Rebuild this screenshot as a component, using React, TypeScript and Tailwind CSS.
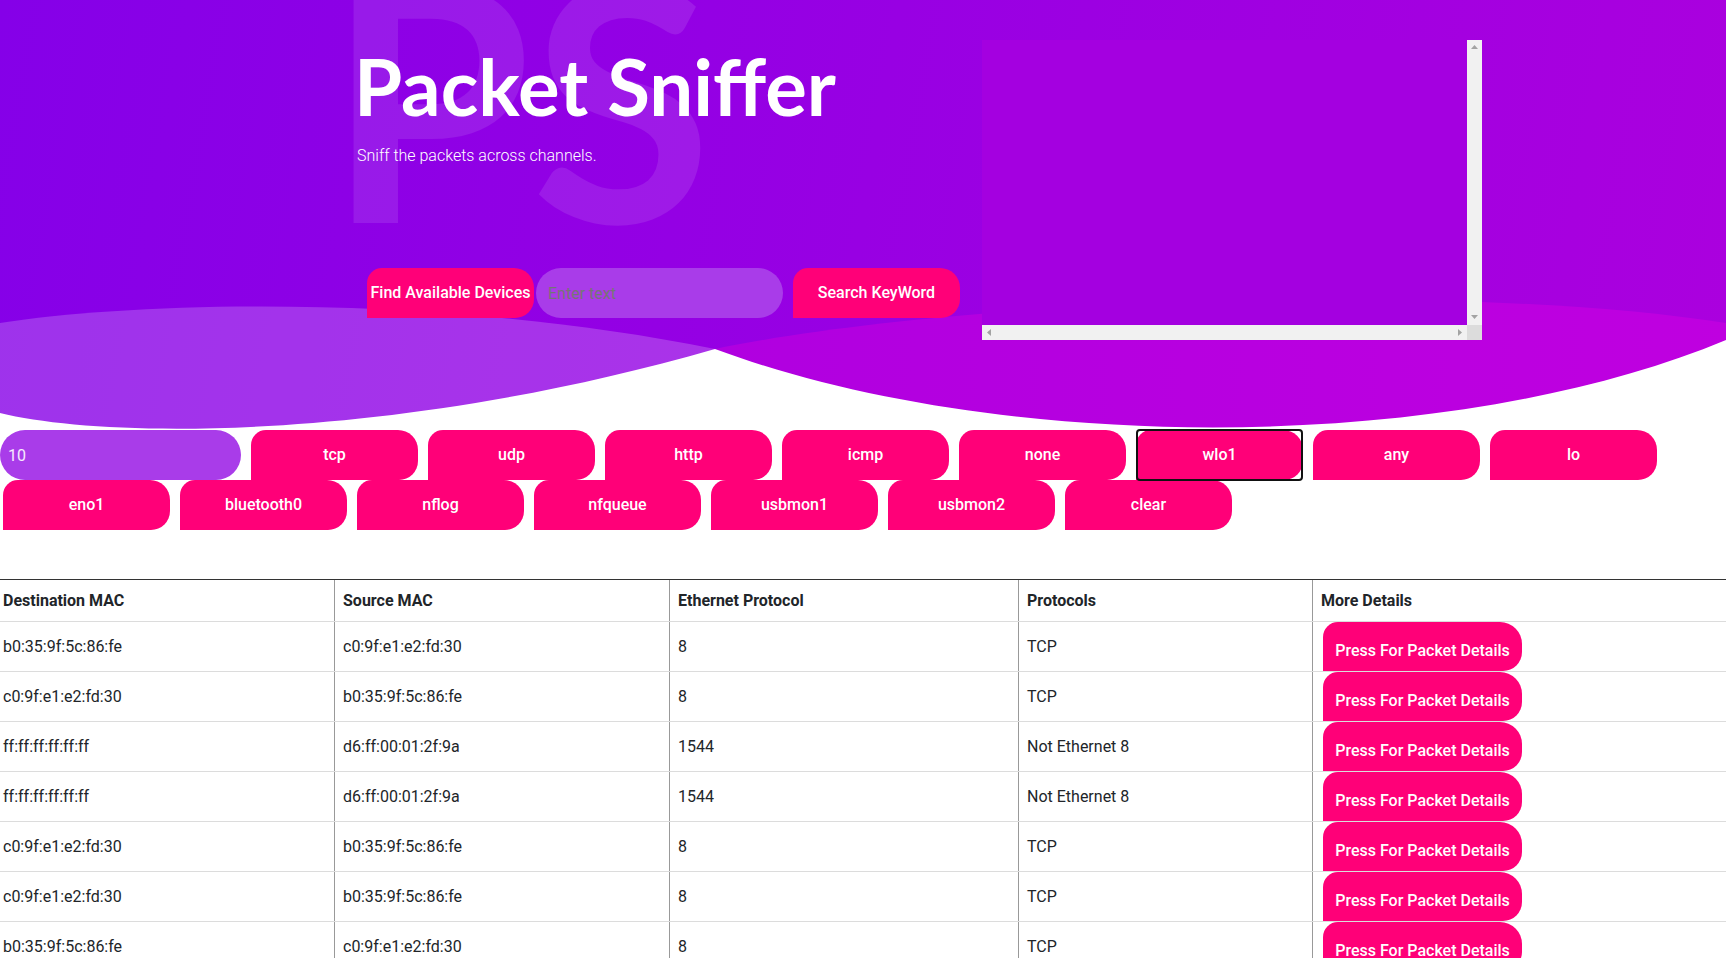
import { useState } from "react";

const pill =
  "h-[50px] w-[167px] shrink-0 rounded-tl-[15px] rounded-tr-[20px] rounded-br-[19px] rounded-bl-none bg-[#ff0078] text-base font-medium text-white";

const filters = [
  "tcp",
  "udp",
  "http",
  "icmp",
  "none",
  "wlo1",
  "any",
  "lo",
  "eno1",
  "bluetooth0",
  "nflog",
  "nfqueue",
  "usbmon1",
  "usbmon2",
  "clear",
];

const packets = [
  ["b0:35:9f:5c:86:fe", "c0:9f:e1:e2:fd:30", "8", "TCP"],
  ["c0:9f:e1:e2:fd:30", "b0:35:9f:5c:86:fe", "8", "TCP"],
  ["ff:ff:ff:ff:ff:ff", "d6:ff:00:01:2f:9a", "1544", "Not Ethernet 8"],
  ["ff:ff:ff:ff:ff:ff", "d6:ff:00:01:2f:9a", "1544", "Not Ethernet 8"],
  ["c0:9f:e1:e2:fd:30", "b0:35:9f:5c:86:fe", "8", "TCP"],
  ["c0:9f:e1:e2:fd:30", "b0:35:9f:5c:86:fe", "8", "TCP"],
  ["b0:35:9f:5c:86:fe", "c0:9f:e1:e2:fd:30", "8", "TCP"],
  ["b0:35:9f:5c:86:fe", "c0:9f:e1:e2:fd:30", "8", "TCP"],
];

const cols = "grid grid-cols-[335px_335px_349px_294px_1fr]";

function Arrow({ dir }: { dir: "up" | "down" | "left" | "right" }) {
  const pts = {
    up: "0,4 3.5,0 7,4",
    down: "0,0 7,0 3.5,4",
    left: "4,0 4,7 0,3.5",
    right: "0,0 4,3.5 0,7",
  }[dir];
  const v = dir === "up" || dir === "down";
  return (
    <svg width={v ? 7 : 4} height={v ? 4 : 7} viewBox={v ? "0 0 7 4" : "0 0 4 7"}>
      <polygon points={pts} fill="#a3a3a3" />
    </svg>
  );
}

function Waves() {
  return (
    <svg
      className="absolute inset-0"
      width="1726"
      height="430"
      viewBox="0 0 1726 430"
      preserveAspectRatio="none"
    >
      <defs>
        <linearGradient id="rightBand" x1="0" x2="1" y1="0" y2="0">
          <stop offset="0" stopColor="#b000e0" />
          <stop offset="1" stopColor="#bf00e0" />
        </linearGradient>
      </defs>
      <path d="M715,349 C950,300 1450,280 1726,323 L1726,430 L715,430 Z" fill="url(#rightBand)" />
      <path d="M0,323 C150,300 450,295 715,349 L715,430 L0,430 Z" fill="#ffffff" fillOpacity="0.2" />
      <path
        d="M0,413 C110,440 400,440 715,349 C1000,455 1450,455 1726,340 L1726,430 L0,430 Z"
        fill="#ffffff"
      />
    </svg>
  );
}

export default function App() {
  const [keyword, setKeyword] = useState("");
  const [count, setCount] = useState("10");

  return (
    <div className="h-[958px] w-[1726px] overflow-hidden bg-white font-['Roboto',sans-serif] text-[#212529]">
      <header className="relative h-[430px] overflow-hidden bg-[linear-gradient(100deg,#8500e8,#ab00de)]">
        <span className="absolute left-[327px] top-[-70px] select-none font-['Lato',sans-serif] text-[330px] font-bold leading-none text-white/10">
          PS
        </span>
        <Waves />

        <div className="relative flex">
          <div className="ml-[355px] flex w-[627px] flex-col">
            <h1 className="ml-[-1px] mt-[47px] font-['Lato',sans-serif] text-[78px] font-bold leading-none text-white">
              Packet Sniffer
            </h1>
            <p className="ml-[2px] mt-[19px] text-base font-light leading-6 text-white">
              Sniff the packets across channels.
            </p>

            <div className="ml-[12px] mt-[100px] flex items-center">
              <button type="button" className={`${pill} w-[166px] whitespace-nowrap`}>
                Find Available Devices
              </button>
              <input
                type="text"
                value={keyword}
                onChange={(e) => setKeyword(e.target.value)}
                placeholder="Enter text"
                className="ml-[2px] h-[50px] w-[247px] rounded-[25px] bg-[#a93ce9] px-[12px] text-base text-white outline-none placeholder:text-[#757575]"
              />
              <button type="button" className={`${pill} ml-[10px]`}>
                Search KeyWord
              </button>
            </div>
          </div>

          <div className="mt-[40px] grid h-[300px] w-[500px] grid-cols-[1fr_15px] grid-rows-[1fr_15px]">
            <textarea
              wrap="off"
              className="h-full w-full resize-none overflow-hidden border-0 bg-[#a400e0] text-white outline-none"
            />
            <div className="flex flex-col items-center justify-between bg-[#f1f1f1] pb-[6px] pt-[5px]">
              <Arrow dir="up" />
              <Arrow dir="down" />
            </div>
            <div className="flex items-center justify-between bg-[#f1f1f1] px-[5px]">
              <Arrow dir="left" />
              <Arrow dir="right" />
            </div>
            <div className="bg-[#dcdcdc]" />
          </div>
        </div>
      </header>

      <div className="flex w-[1726px] flex-wrap">
        <input
          type="text"
          value={count}
          onChange={(e) => setCount(e.target.value)}
          className="mr-[7px] h-[50px] w-[241px] rounded-[25px] bg-[#a93ce9] pl-[8px] text-base text-white/90 outline-none"
        />
        {filters.map((f) =>
          f === "wlo1" ? (
            <span key={f} className="relative ml-[3px] mr-[7px]">
              <button type="button" className={pill}>
                {f}
              </button>
              <span className="pointer-events-none absolute inset-x-0 inset-y-[-1px] rounded-[4px] border-2 border-[#111]" />
            </span>
          ) : (
            <button key={f} type="button" className={`${pill} ml-[3px] mr-[7px]`}>
              {f}
            </button>
          )
        )}
      </div>

      <div className="mt-[49px] w-[1726px] text-base">
        <div className={`${cols} h-[43px] border-y border-t-[#333] border-b-[#dcdcdc] font-bold`}>
          <div className="flex items-center border-r border-[#999] pl-[3px]">Destination MAC</div>
          <div className="flex items-center border-r border-[#999] pl-2">Source MAC</div>
          <div className="flex items-center border-r border-[#999] pl-2">Ethernet Protocol</div>
          <div className="flex items-center border-r border-[#999] pl-2">Protocols</div>
          <div className="flex items-center pl-2">More Details</div>
        </div>

        {packets.map((p, i) => (
          <div key={i} className={`${cols} h-[50px] border-b border-[#dcdcdc]`}>
            <div className="flex items-center border-r border-[#999] pl-[3px]">{p[0]}</div>
            <div className="flex items-center border-r border-[#999] pl-2">{p[1]}</div>
            <div className="flex items-center border-r border-[#999] pl-2">{p[2]}</div>
            <div className="flex items-center border-r border-[#999] pl-2">{p[3]}</div>
            <div className="flex items-center pl-[10px]">
              <button
                type="button"
                className="h-[49px] w-[199px] rounded-tl-[15px] rounded-tr-[22px] rounded-br-[19px] rounded-bl-none bg-[#ff0078] pt-[8px] text-base font-medium text-white"
              >
                Press For Packet Details
              </button>
            </div>
          </div>
        ))}
      </div>
    </div>
  );
}
